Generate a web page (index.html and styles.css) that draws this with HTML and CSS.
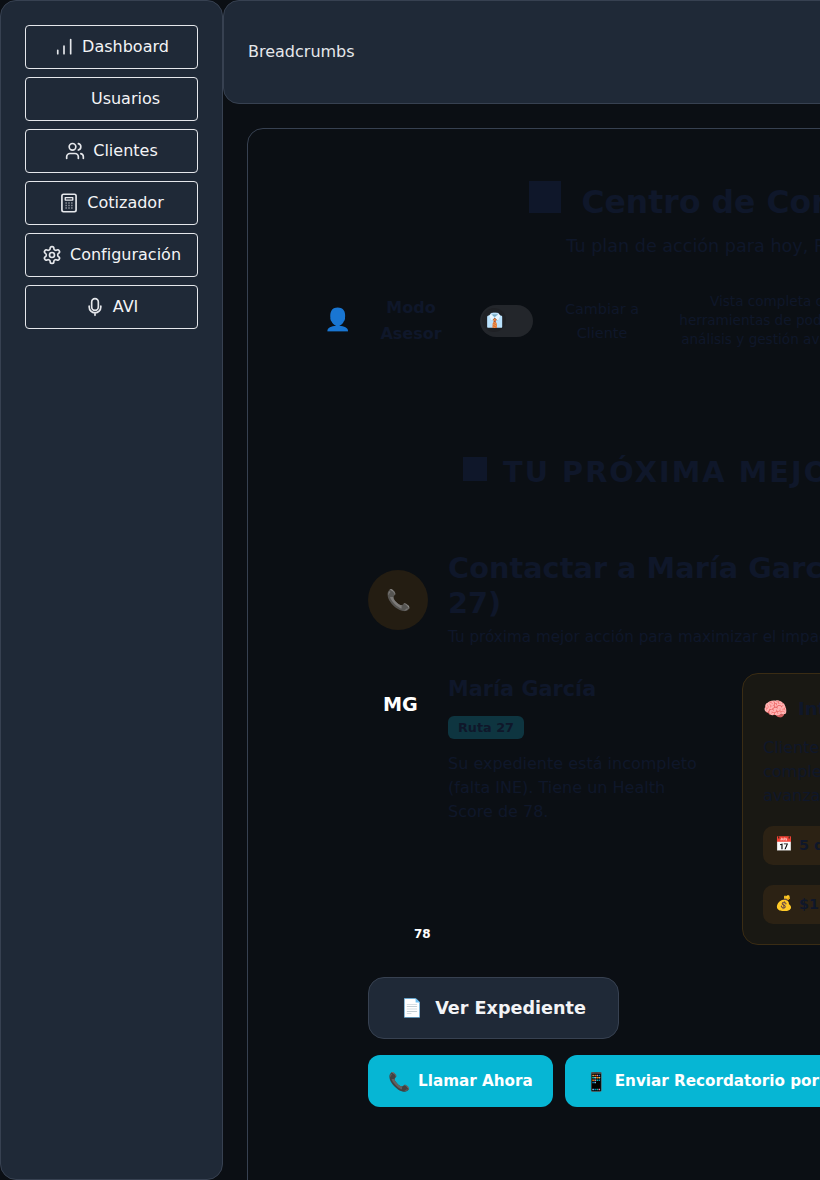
FILE: index.html
```html
<!DOCTYPE html>
<html lang="es">
<head>
<meta charset="utf-8">
<title>Centro de Control</title>
<link rel="stylesheet" href="styles.css">
</head>
<body>
<div class="app">
  <aside class="sidebar">
    <nav class="nav">
      <a class="nav-btn"><svg class="ico" viewBox="0 0 24 24"><path d="M4.5 20v-4M12 20v-9M20 20V3"/></svg>Dashboard</a>
      <a class="nav-btn"><span class="ico"></span>Usuarios</a>
      <a class="nav-btn"><svg class="ico" viewBox="0 0 24 24"><circle cx="9" cy="7" r="4"/><path d="M16 21v-2a4 4 0 0 0-4-4H6a4 4 0 0 0-4 4v2M16 3.13a4 4 0 0 1 0 7.75M22 21v-2a4 4 0 0 0-3-3.87"/></svg>Clientes</a>
      <a class="nav-btn"><svg class="ico" viewBox="0 0 24 24"><rect x="3.5" y="1.5" width="17" height="21" rx="2"/><path class="thin" d="M7.5 5.5h9v3h-9zM8 12h1M11.5 12h1M15 12h1M8 15h1M11.5 15h1M15 15h1M8 18h1M11.5 18h1M15 18h1"/></svg>Cotizador</a>
      <a class="nav-btn"><svg class="ico" viewBox="0 0 24 24"><path d="M12.22 2h-.44a2 2 0 0 0-2 2v.18a2 2 0 0 1-1 1.73l-.43.25a2 2 0 0 1-2 0l-.15-.08a2 2 0 0 0-2.73.73l-.22.38a2 2 0 0 0 .73 2.73l.15.1a2 2 0 0 1 1 1.72v.51a2 2 0 0 1-1 1.74l-.15.09a2 2 0 0 0-.73 2.73l.22.38a2 2 0 0 0 2.73.73l.15-.08a2 2 0 0 1 2 0l.43.25a2 2 0 0 1 1 1.73V20a2 2 0 0 0 2 2h.44a2 2 0 0 0 2-2v-.18a2 2 0 0 1 1-1.73l.43-.25a2 2 0 0 1 2 0l.15.08a2 2 0 0 0 2.73-.73l.22-.39a2 2 0 0 0-.73-2.73l-.15-.08a2 2 0 0 1-1-1.74v-.5a2 2 0 0 1 1-1.74l.15-.09a2 2 0 0 0 .73-2.73l-.22-.38a2 2 0 0 0-2.73-.73l-.15.08a2 2 0 0 1-2 0l-.43-.25a2 2 0 0 1-1-1.73V4a2 2 0 0 0-2-2z"/><circle cx="12" cy="12" r="3"/></svg>Configuración</a>
      <a class="nav-btn"><svg class="ico" viewBox="0 0 24 24"><rect x="8" y="2" width="8" height="14" rx="4"/><path d="M19 11v1a7 7 0 0 1-14 0v-1M12 19v3"/></svg>AVI</a>
    </nav>
  </aside>
  <div class="content">
    <header class="topbar">Breadcrumbs</header>
    <main class="main">
      <section class="panel">
        <div class="page-head">
          <h1 class="page-title"><span class="sq sq-lg"></span>Centro de Control</h1>
          <p class="page-sub">Tu plan de acción para hoy, Raúl!</p>
        </div>
        <div class="mode-row">
          <span class="mode-ico">👤</span>
          <strong class="mode-name">Modo Asesor</strong>
          <span class="toggle"><span class="knob">👔</span></span>
          <span class="mode-switch">Cambiar a Cliente</span>
          <span class="mode-desc">Vista completa con herramientas de poder para análisis y gestión avanzada</span>
        </div>
        <h2 class="section-title"><span class="sq sq-sm"></span>TU PRÓXIMA MEJOR ACCIÓN</h2>
        <div class="hero">
          <div class="hero-head">
            <span class="hero-ico"><span class="dim">📞</span></span>
            <div class="hero-text">
              <h3 class="hero-title">Contactar a María García (Ruta 27)</h3>
              <p class="hero-sub">Tu próxima mejor acción para maximizar el impacto de hoy</p>
            </div>
          </div>
          <div class="client">
            <div class="avatar-col">
              <span class="initials">MG</span>
              <span class="score">78</span>
            </div>
            <div class="client-info">
              <h4 class="client-name">María García</h4>
              <span class="badge">Ruta 27</span>
              <p class="client-desc">Su expediente está incompleto (falta INE). Tiene un Health Score de 78.</p>
            </div>
            <aside class="insight">
              <div class="insight-head"><span class="brain">🧠</span><strong>Inteligencia</strong></div>
              <p class="insight-text">Cliente con alta probabilidad de completar su expediente si se avanza hoy mismo.</p>
              <div class="pill">📅 <b>5 días sin contacto</b></div>
              <div class="pill">💰 <b>$12,500 en riesgo</b></div>
            </aside>
          </div>
          <a class="btn-secondary"><span>📄</span>Ver Expediente</a>
          <div class="actions">
            <a class="btn-primary"><span class="btn-emoji">📞</span>Llamar Ahora</a>
            <a class="btn-primary"><span class="btn-emoji">📱</span>Enviar Recordatorio por WhatsApp</a>
          </div>
        </div>
      </section>
    </main>
  </div>
</div>
</body>
</html>
```
FILE: styles.css
```css
* { box-sizing: border-box; }
html, body { margin: 0; height: 1180px; overflow: hidden; background: #0b0f14; }
body { font-family: "DejaVu Sans", sans-serif; color: #0f172a; }
h1, h2, h3, h4, p { margin: 0; }

.app { display: flex; width: 1400px; height: 1180px; align-items: stretch; }

.sidebar { flex: 0 0 223px; background: #1f2937; border: 1px solid #374151; border-radius: 16px; padding: 24px; }
.nav { display: flex; flex-direction: column; gap: 8px; }
.nav-btn { height: 44px; display: flex; align-items: center; justify-content: center; gap: 8px; border: 1px solid #e5e7eb; border-radius: 4px; color: #f3f4f6; font-size: 16px; padding-bottom: 2px; }
.ico { width: 20px; height: 20px; fill: none; stroke: #e5e7eb; stroke-width: 2; stroke-linecap: round; stroke-linejoin: round; flex: none; margin-top: 2px; }
.thin { stroke-width: 1.6; stroke-linecap: butt; }

.content { flex: 1; min-width: 0; }
.topbar { height: 104px; background: #1f2937; border: 1px solid #374151; border-radius: 16px; padding: 0 24px 2px; display: flex; align-items: center; color: #e5e7eb; font-size: 16px; }
.main { padding: 24px; }
.panel { height: 1200px; border: 1px solid #374151; border-radius: 16px; padding: 51px 0 0 120px; }

.page-head { width: 690px; text-align: center; }
.page-title { display: flex; justify-content: center; align-items: center; gap: 20px; font-size: 31.5px; font-weight: 700; line-height: 44px; }
.sq { display: block; background: #0f172a; flex: none; }
.sq-lg { width: 32px; height: 32px; margin-top: -10px; }
.sq-sm { width: 24px; height: 24px; margin-top: -6px; }
.page-sub { font-size: 17.6px; line-height: 28px; margin-top: 8px; }

.mode-row { display: flex; align-items: center; margin: 32px 0 0 -44px; }
.mode-ico { font-size: 22px; line-height: 24px; padding-bottom: 2px; width: 24px; text-align: center; flex: none; color: #1976d2; }
.mode-name { width: 62px; margin-left: 32px; font-size: 16px; line-height: 26px; text-align: center; flex: none; }
.toggle { width: 53px; height: 32px; border-radius: 16px; background: #23262b; margin-left: 38px; padding: 3px 4px 5px 2px; flex: none; display: flex; }
.knob { width: 24px; height: 24px; border-radius: 50%; background: #1f2125; font-size: 14px; display: flex; align-items: center; justify-content: center; }
.mode-switch { width: 76px; margin-left: 31px; font-size: 14.4px; line-height: 24px; text-align: center; flex: none; }
.mode-desc { width: 200px; margin-left: 35px; font-size: 13.6px; line-height: 19px; text-align: center; flex: none; }

.section-title { display: flex; align-items: center; gap: 16px; margin: 103px 0 0 95px; font-size: 28.8px; line-height: 40px; font-weight: 700; letter-spacing: 2px; white-space: nowrap; }

.hero { margin-top: 59px; }
.hero-head { display: flex; align-items: center; gap: 20px; }
.hero-ico { width: 60px; height: 60px; border-radius: 50%; background: #241d12; display: flex; align-items: center; justify-content: center; font-size: 20px; flex: none; }
.dim { opacity: .8; filter: grayscale(1) brightness(1.5); }
.hero-text { width: 520px; }
.hero-title { font-size: 28.8px; line-height: 34.5px; font-weight: 700; }
.hero-sub { font-size: 15.2px; line-height: 23px; white-space: nowrap; margin-top: 6px; }

.client { display: flex; margin-top: 24px; height: 272px; }
.avatar-col { width: 80px; flex: none; }
.initials { display: block; color: #fff; font-size: 19.2px; font-weight: 700; line-height: 26px; margin: 19px 0 0 15px; }
.score { display: block; color: #fff; font-size: 12px; font-weight: 700; line-height: 16px; margin: 208px 0 0 46px; }
.client-info { width: 270px; flex: none; padding-top: 3px; }
.client-name { font-size: 20.8px; line-height: 27px; font-weight: 700; }
.badge { display: inline-block; margin-top: 13px; padding: 0 10px; height: 23px; line-height: 23px; border-radius: 6px; background: #0e3540; font-size: 12.8px; font-weight: 700; }
.client-desc { font-size: 16px; line-height: 24px; width: 255px; margin-top: 13px; }
.insight { width: 400px; height: 272px; margin: 0 0 0 24px; flex: none; background: #191813; border: 1px solid #3a2c14; border-radius: 16px; padding: 20px; }
.insight-head { display: flex; align-items: center; gap: 10px; font-size: 18px; line-height: 28px; padding-top: 1px; }
.brain { font-size: 20px; }
.insight-text { font-size: 16px; line-height: 24px; margin-top: 13px; width: 300px; }
.pill { height: 39px; border-radius: 10px; background: #2c2214; display: flex; align-items: center; gap: 6px; padding: 0 12px 2px; font-size: 14.4px; margin-top: 20px; width: 300px; }
.insight-text + .pill { margin-top: 18px; }

.btn-secondary { display: inline-flex; align-items: center; gap: 12px; height: 62px; width: 251px; justify-content: center; margin-top: 32px; background: #1f2937; border: 1px solid #374151; border-radius: 16px; color: #f3f4f6; font-size: 17.6px; font-weight: 700; }
.actions { display: flex; gap: 12px; margin-top: 16px; }
.btn-primary { display: flex; align-items: center; height: 52px; padding: 0 20px; background: #06b6d4; border-radius: 12px; color: #fff; font-size: 15.2px; font-weight: 700; white-space: nowrap; }
.btn-emoji { font-size: 18px; margin-right: 8px; }
```
